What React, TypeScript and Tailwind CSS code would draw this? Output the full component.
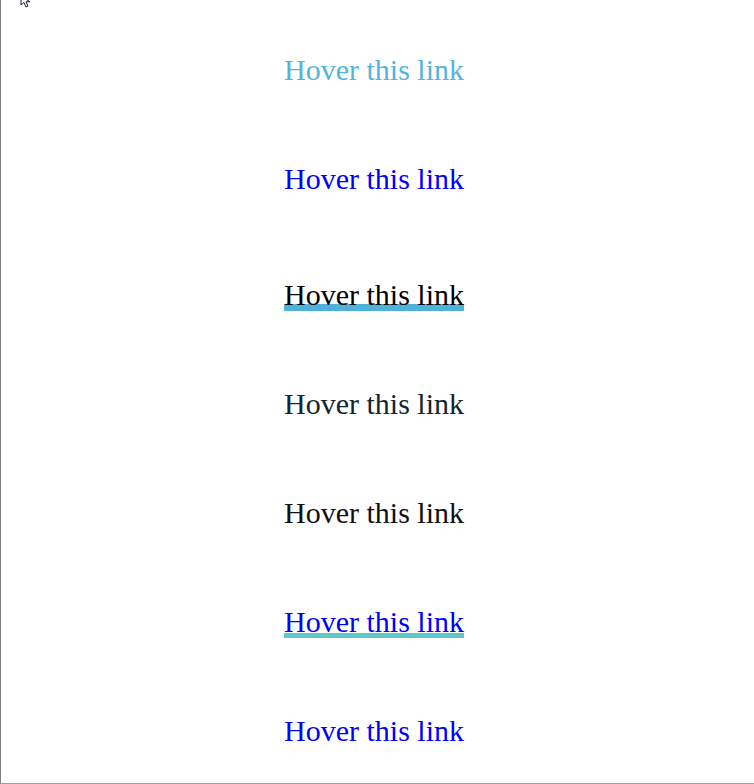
const links = [
  { text: "Hover this link", cls: "mt-0 text-[#55b4dc]" },
  { text: "Hover this link", cls: "mt-[76px] text-[#0000ff]" },
  {
    text: "Hover this link",
    cls: "mt-[83px] text-[#000000] bg-[linear-gradient(#4fb2d8,#4fb2d8)] bg-no-repeat bg-bottom bg-[length:100%_7px]",
  },
  { text: "Hover this link", cls: "mt-[76px] text-[#15252f]" },
  { text: "Hover this link", cls: "mt-[76px] text-[#111111]" },
  {
    text: "Hover this link",
    cls: "mt-[76px] text-[#0000ff] bg-[linear-gradient(#5ec7c9,#5ec7c9)] bg-no-repeat bg-bottom bg-[length:100%_5px]",
  },
  { text: "Hover this link", cls: "mt-[76px] text-[#0000ff]" },
];

function Cursor() {
  return (
    <svg
      className="absolute left-[19px] top-[-4px]"
      width="14"
      height="14"
      viewBox="0 0 14 14"
    >
      <path
        d="M1 0 L1 9 L4 6.5 L6 11 L8 10 L6 5.8 L10 5.8 Z"
        fill="#fff"
        stroke="#1a1a2e"
        strokeWidth="1"
        strokeLinejoin="round"
      />
    </svg>
  );
}

export default function App() {
  return (
    <div className="relative h-[784px] w-[754px] overflow-hidden border-b border-l border-b-[#a0a0a0] border-l-[#808080] bg-white">
      <div className="flex w-[746px] flex-col items-center pt-[53px] font-['Liberation_Serif',serif] text-[30px] leading-[33px]">
        {links.map((item, i) => (
          <div key={i} className={"shrink-0 " + item.cls.split(" ")[0]}>
            <a
              href="#"
              className={item.cls.split(" ").slice(1).join(" ")}
            >
              {item.text}
            </a>
          </div>
        ))}
      </div>
      <Cursor />
    </div>
  );
}
